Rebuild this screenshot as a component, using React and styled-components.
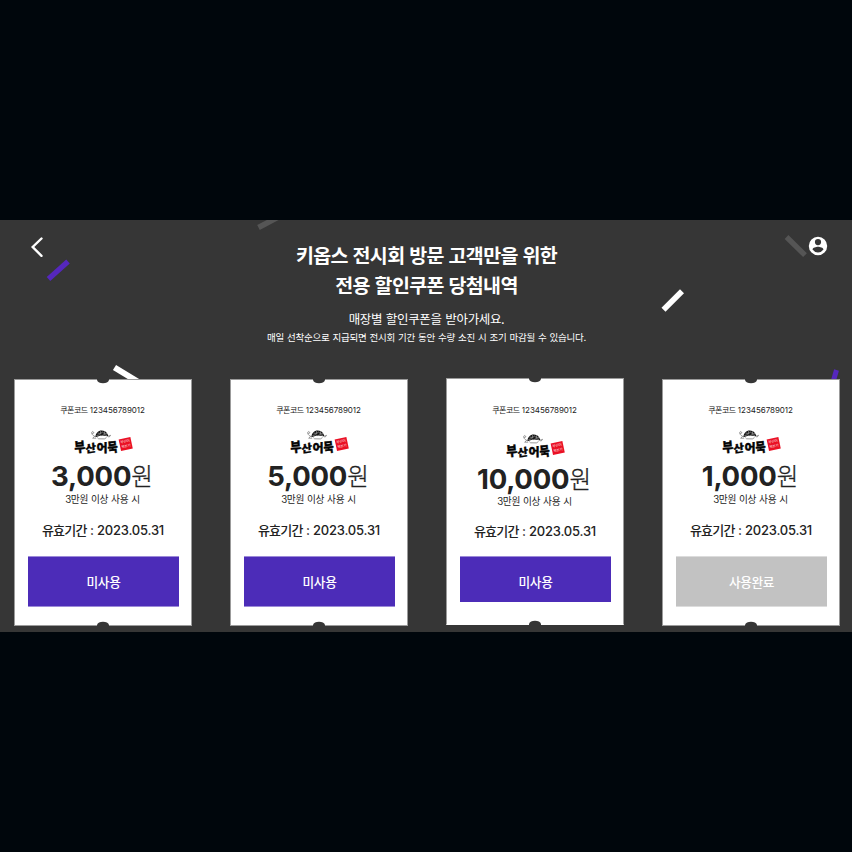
import React from 'react';
import styled, { createGlobalStyle } from 'styled-components';

const GlobalStyle = createGlobalStyle`
  * { box-sizing: border-box; }
  body { margin: 0; background: #00060c; font-family: Inter, "Noto Sans CJK KR", sans-serif; }
`;

const Page = styled.div`
  height: 852px;
  width: 852px;
  padding: 220px 0;
  background: #00060c;
`;

const Stage = styled.main`
  position: relative;
  height: 412px;
  overflow: hidden;
  background: #363636;
`;

const Confetti = styled.svg`
  position: absolute;
  inset: 0;
  width: 852px;
  height: 412px;
`;

const Header = styled.header`
  position: relative;
  display: grid;
  grid-template-columns: 22px 1fr 20px;
  height: 158px;
  padding: 0 24px 0 30px;
`;

const IconButton = styled.button`
  display: flex;
  height: 22px;
  margin-top: 16px;
  padding: 0;
  border: 0;
  background: none;
  color: #fff;
`;

const Intro = styled.div`
  display: flex;
  flex-direction: column;
  align-items: center;
  padding: 21px 7px 0 0;
  color: #fff;
  white-space: nowrap;
`;

const Title = styled.h1`
  margin: 0;
  font-size: 19.5px;
  font-weight: 700;
  line-height: 30px;
  letter-spacing: -0.65px;
  word-spacing: 0.8px;
  text-align: center;
`;

const Lead = styled.p`
  margin: 10px 0 0;
  font-size: 12.5px;
  line-height: 18px;
  letter-spacing: -0.35px;
  word-spacing: 0.6px;
`;

const Notice = styled.p`
  margin: 0;
  font-size: 9.5px;
  line-height: 18px;
  letter-spacing: -0.22px;
  word-spacing: 0.5px;
`;

const CouponList = styled.section`
  position: relative;
  display: flex;
  gap: 38px;
  padding-left: 14px;
`;

const Card = styled.article`
  position: relative;
  display: flex;
  flex: none;
  flex-direction: column;
  align-items: center;
  width: 178px;
  height: 247px;
  margin-top: ${(p) => (p.$tall ? 0 : 1)}px;
  padding-top: ${(p) => (p.$tall ? 24 : 23)}px;
  border: 1px solid #9b9b9b;
  border-bottom-color: ${(p) => (p.$tall ? '#fff' : '#9b9b9b')};
  background: #fff;
  color: #222;
  white-space: nowrap;
`;

const Notch = styled.svg`
  position: absolute;
  left: 82px;
  width: 12px;
  height: 5px;
  ${(p) => (p.$bottom ? 'bottom: -1px; transform: rotate(180deg);' : 'top: -1px;')}
`;

const Ko = styled.span`
  letter-spacing: -0.06em;
`;

const Code = styled.p`
  margin: 0;
  padding-right: 1px;
  font-size: 8px;
  line-height: 14px;
  letter-spacing: -0.05px;
`;

const Logo = styled.svg`
  display: block;
  overflow: visible;
  width: 62px;
  height: 28px;
  margin-top: ${(p) => (p.$tall ? 16 : 12)}px;
  margin-right: 2px;
`;

const Price = styled.p`
  margin: ${(p) => (p.$tall ? 2 : 3)}px 2px 0 0;
  height: 32px;
  font-size: 27.5px;
  font-weight: 700;
  line-height: 32px;
  letter-spacing: -0.2px;
`;

const Won = styled.span`
  position: relative;
  top: -1px;
  font-size: 23.5px;
  font-weight: 300;
  letter-spacing: 0;
  -webkit-text-stroke: 0.3px #222;
`;

const Condition = styled.p`
  margin: ${(p) => (p.$tall ? 0 : 1)}px 1px 0 0;
  font-size: 9.7px;
  line-height: 14px;
  letter-spacing: -0.3px;
  word-spacing: 0.5px;
`;

const Validity = styled.p`
  margin: ${(p) => (p.$tall ? 13 : 14)}px 0 0;
  font-size: 13px;
  font-weight: 500;
  line-height: 18px;
  letter-spacing: -0.2px;
`;

const Status = styled.button`
  width: 151px;
  height: ${(p) => (p.$tall ? 46 : 51)}px;
  margin: ${(p) => (p.$tall ? 16 : 17)}px 0 0 1px;
  padding: ${(p) => (p.$tall ? '5px 0 0' : '0')};
  border: solid ${(p) => (p.$used ? '#dcdcdc' : '#9c8ad8')};
  border-width: ${(p) => (p.$tall ? '1px 0 0' : '1px 0')};
  background: ${(p) => (p.$used ? '#c2c2c2' : '#4c2cb8')};
  color: #fff;
  font: 500 12.700px/20px "Noto Sans CJK KR", sans-serif;
  letter-spacing: -0.03em;
`;

const LogoText = styled.text`
  font-family: "Noto Sans CJK KR", sans-serif;
  font-weight: 900;
  fill: #050505;
  stroke: #050505;
  stroke-width: 0.35px;
  stroke-linejoin: round;
`;

const SealText = styled.text`
  font-family: "Noto Sans CJK KR", sans-serif;
  font-size: 3.6px;
  fill: #fff;
  fill-opacity: 0.85;
`;

const coupons = [
  { amount: '3,000' },
  { amount: '5,000' },
  { amount: '10,000', tall: true },
  { amount: '1,000', used: true },
];

function NotchShape({ bottom }) {
  return (
    <Notch $bottom={bottom} viewBox="0 0 12 5">
      <path d="M0 0H12V1C11.400 3.200 9 4.300 6 4.300S.6 3.200 0 1Z" fill="#363636" />
    </Notch>
  );
}

function BrandLogo({ tall }) {
  return (
    <Logo $tall={tall} viewBox="-4 0 62 28">
      <path d="M20.300 8.200C20.800 4 23.400 1.500 26.800 1.600c3.800.1 6 2.600 6.600 6-3.700-1.100-8.300-1-13.100.6Z" fill="#151515" />
      <path d="m22.500 4 3 .6 2-1.500 2 1.700 3-.2M21.500 6.500l3-.7 2 1 2.500-1.100 3 .8M25.500 2.200v2.400M29.500 2.300v2.500" stroke="#d5d5d5" strokeWidth=".5" fill="none" />
      <path d="M20 7.500c-1.500-.6-2.800-1.500-3.200-3.200-.3-1.500.9-2.300 1.700-1.300.8 1.200-.8 2.200-1.800 1.100M19.500 7.500l-1.800 1.700h3.500M33 7.300l2.600-1-1.700 2.100M22.300 8.600l1.300 1.200 5.800.1 2.100-1.300" stroke="#666" strokeWidth=".65" fill="none" />
      <LogoText fontSize="12" transform="translate(-.3 23.200) rotate(-5) scale(1 1.120)">부</LogoText>
      <LogoText fontSize="11.500" transform="translate(10.800 24) rotate(-9) skewX(-5) scale(1 .92)">산</LogoText>
      <LogoText fontSize="11.500" transform="translate(21.500 23.300) scale(1.050 .98)">어</LogoText>
      <LogoText fontSize="12" transform="translate(33 23.500) rotate(-6) scale(.93 1.100)">묵</LogoText>
      <g transform="rotate(-12 50.700 15)">
        <rect x="44.700" y="9.200" width="12" height="11.700" fill="#ea1024" />
        <SealText x="46" y="13.600" textLength="9.500">부산어</SealText>
        <SealText x="46" y="18.400" textLength="9.500">묵본가</SealText>
      </g>
    </Logo>
  );
}

function Coupon({ amount, tall, used }) {
  return (
    <Card $tall={tall}>
      <NotchShape />
      <Code><Ko>쿠폰코드</Ko> 123456789012</Code>
      <BrandLogo tall={tall} />
      <Price $tall={tall}>{amount}<Won>원</Won></Price>
      <Condition $tall={tall}>3만원 이상 사용 시</Condition>
      <Validity $tall={tall}><Ko>유효기간</Ko> : 2023.05.31</Validity>
      <Status $tall={tall} $used={used}>{used ? '사용완료' : '미사용'}</Status>
      <NotchShape bottom />
    </Card>
  );
}

export default function App() {
  return (
    <>
      <GlobalStyle />
      <Page>
        <Stage>
          <Confetti viewBox="0 0 852 412" fill="none">
            <path d="M48.500 59 68 41.500" stroke="#5527bd" strokeWidth="5.300" />
            <path d="M258.500 7.500 284-6" stroke="#555" strokeWidth="5.500" />
            <path d="m114.500 147.500 28 17" stroke="#fff" strokeWidth="6" />
            <path d="M663.500 89.800 682 71.200" stroke="#fff" strokeWidth="5.700" />
            <path d="m786.500 17 18.500 18.200" stroke="#555" strokeWidth="5.300" />
            <path d="m836.500 150-4 14" stroke="#5527bd" strokeWidth="5" />
          </Confetti>
          <Header>
            <IconButton aria-label="Back">
              <svg width="22" height="22" viewBox="0 0 22 22"><path d="m11.500 2.500-8.800 8.500 8.800 8.800" fill="none" stroke="#fff" strokeWidth="2.400" strokeLinecap="round" /></svg>
            </IconButton>
            <Intro>
              <Title>키옵스 전시회 방문 고객만을 위한<br />전용 할인쿠폰 당첨내역</Title>
              <Lead>매장별 할인쿠폰을 받아가세요.</Lead>
              <Notice>매일 선착순으로 지급되면 전시회 기간 동안 수량 소진 시 조기 마감될 수 있습니다.</Notice>
            </Intro>
            <IconButton aria-label="Account">
              <svg width="20" height="20" viewBox="0 0 20 20"><path fillRule="evenodd" d="M10 .8a9.200 9.200 0 1 0 0 18.400A9.200 9.200 0 0 0 10 .8Zm0 2.200a3.100 3.100 0 1 1 0 6.200 3.100 3.100 0 0 1 0-6.200Zm0 13.400a6.700 6.700 0 0 1-5.500-2.900c.1-1.800 3.600-2.800 5.500-2.800s5.400 1 5.500 2.800A6.700 6.700 0 0 1 10 16.400Z" fill="#fff" /></svg>
            </IconButton>
          </Header>
          <CouponList>
            {coupons.map((c) => <Coupon key={c.amount} {...c} />)}
          </CouponList>
        </Stage>
      </Page>
    </>
  );
}
